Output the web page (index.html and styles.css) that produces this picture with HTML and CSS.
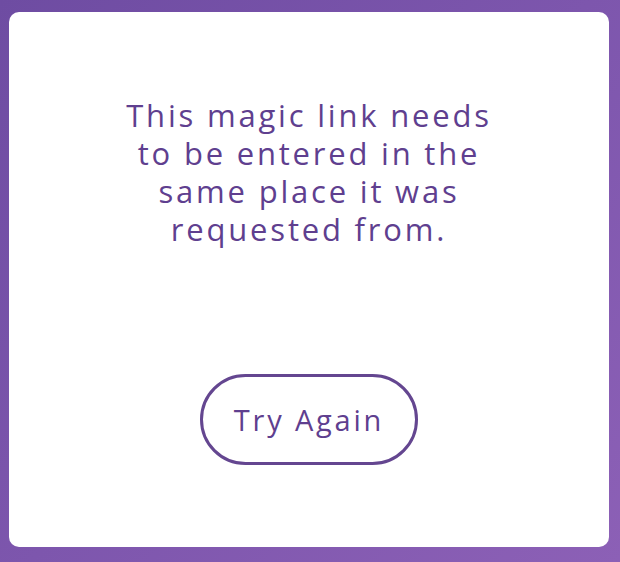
FILE: index.html
```html
<!DOCTYPE html>
<html>
<head>
<meta charset="utf-8">
<link rel="stylesheet" href="styles.css">
</head>
<body>
<main class="card">
  <p class="message">This magic link needs<br>to be entered in the<br>same place it was<br>requested from.</p>
  <button class="retry" type="button">Try Again</button>
</main>
</body>
</html>
```
FILE: styles.css
```css
html, body {
  margin: 0;
  height: 100%;
}
body {
  background: linear-gradient(135deg, #6e4ca2 0%, #7d56ad 50%, #8c60b6 100%);
  padding: 12px 11px 15px 9px;
  box-sizing: border-box;
  font-family: "Open Sans", "Noto Sans", sans-serif;
}
.card {
  background: #fff;
  border-radius: 10px;
  height: 535px;
  width: 600px;
  box-sizing: border-box;
  display: flex;
  flex-direction: column;
  align-items: center;
  padding-top: 84px;
}
.message {
  margin: 0;
  text-align: center;
  color: #5f3f8f;
  font-size: 31px;
  font-weight: 400;
  line-height: 38px;
  letter-spacing: 2.8px;
}
.retry {
  margin-top: 126px;
  width: 218px;
  height: 91px;
  border: 3px solid #644690;
  border-radius: 46px;
  background: #fff;
  color: #5f3f8f;
  font-family: inherit;
  font-size: 29px;
  letter-spacing: 2.8px;
  padding: 0;
}
```
